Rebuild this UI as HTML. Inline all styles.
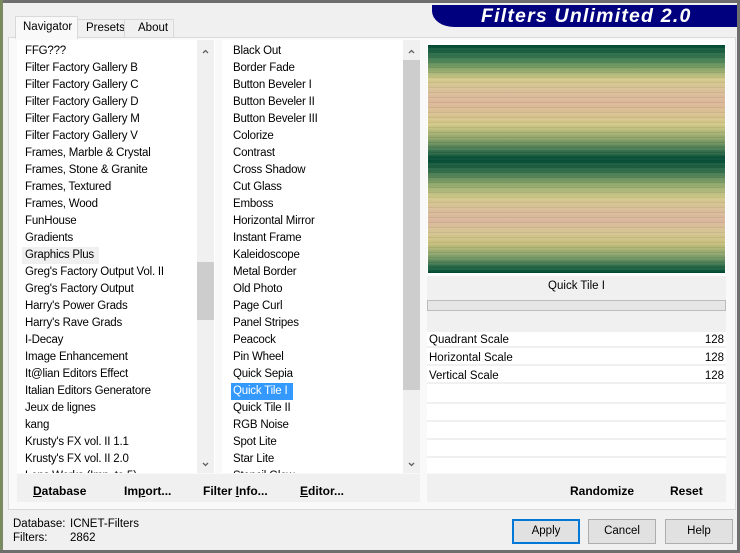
<!DOCTYPE html>
<html><head><style>
*{margin:0;padding:0;box-sizing:border-box}
body{width:740px;height:553px;overflow:hidden;background:#f0f0f0;font-family:"Liberation Sans",sans-serif;font-size:11.5px;color:#000;position:relative}
.a{position:absolute}
.list div{height:17px;line-height:17px;padding-left:8px;white-space:nowrap;letter-spacing:-0.2px}
.sb{background:#f0f0f0;width:17px}
.arr{width:17px;height:10px}
.btn{position:absolute;border:1px solid #adadad;background:#e1e1e1;text-align:center;line-height:22px;height:25px;width:68px}
.bb{font-weight:bold;font-size:12px}
.row{position:absolute;left:427px;width:299px;height:16px;background:#fff;border-bottom:2px solid #f0f0f0;line-height:16px}
</style></head><body>
<div class="a" style="left:0;top:0;width:740px;height:3px;background:#6e6e6e"></div>
<div class="a" style="left:0;top:0;width:3px;height:553px;background:#7a8a60"></div>
<div class="a" style="left:0;top:550px;width:740px;height:3px;background:#6e6e6e"></div>
<div class="a" style="left:737px;top:0;width:3px;height:553px;background:#6e6e6e"></div>
<!-- banner -->
<div class="a" style="left:432px;top:5px;width:305px;height:22px;background:#00007f;border-bottom-left-radius:22px 16px;color:#fff;font-weight:bold;font-style:italic;font-size:19.5px;line-height:23px;padding-left:49px;letter-spacing:1.2px">Filters Unlimited 2.0</div>
<!-- panel -->
<div class="a" style="left:8px;top:37px;width:728px;height:473px;background:#f9f9f9;border:1px solid #d9d9d9"></div>
<!-- tabs -->
<div class="a" style="left:77px;top:19px;width:97px;height:19px;border:1px solid #d9d9d9;background:#f0f0f0"></div>
<div class="a" style="left:86px;top:22px">Presets</div>
<div class="a" style="left:124px;top:19px;width:1px;height:18px;background:#d9d9d9"></div>
<div class="a" style="left:138px;top:22px">About</div>
<div class="a" style="left:15px;top:16px;width:63px;height:23px;border:1px solid #d9d9d9;border-bottom:none;background:#f9f9f9;padding:4px 0 0 7px">Navigator</div>
<!-- left list -->
<div class="a" style="left:17px;top:40px;width:198px;height:433px;background:#fff;overflow:hidden">
<div class="list" style="padding-top:3px">
<div>FFG???</div><div>Filter Factory Gallery B</div><div>Filter Factory Gallery C</div><div>Filter Factory Gallery D</div><div>Filter Factory Gallery M</div><div>Filter Factory Gallery V</div><div>Frames, Marble &amp; Crystal</div><div>Frames, Stone &amp; Granite</div><div>Frames, Textured</div><div>Frames, Wood</div><div>FunHouse</div><div>Gradients</div><div><span style="background:#f0f0f0;margin-left:-3px;padding:0 5px 0 3px;display:inline-block;height:17px">Graphics Plus</span></div><div>Greg's Factory Output Vol. II</div><div>Greg's Factory Output</div><div>Harry's Power Grads</div><div>Harry's Rave Grads</div><div>I-Decay</div><div>Image Enhancement</div><div>It@lian Editors Effect</div><div>Italian Editors Generatore</div><div>Jeux de lignes</div><div>kang</div><div>Krusty's FX vol. II 1.1</div><div>Krusty's FX vol. II 2.0</div><div>Lens Works (Imp. to 5)</div>
</div></div>
<div class="a sb" style="left:197px;top:40px;height:433px"></div>
<div class="a" style="left:197px;top:262px;width:17px;height:58px;background:#cdcdcd"></div>
<svg class="a arr" style="left:197px;top:47px" viewBox="0 0 17 10"><path d="M6 6 L8.5 3.5 L11 6" fill="none" stroke="#606060" stroke-width="1.3"/></svg>
<svg class="a arr" style="left:197px;top:459px" viewBox="0 0 17 10"><path d="M6 4 L8.5 6.5 L11 4" fill="none" stroke="#606060" stroke-width="1.3"/></svg>
<!-- middle list -->
<div class="a" style="left:222px;top:40px;width:198px;height:433px;background:#fff;overflow:hidden">
<div class="list" style="padding-top:3px;padding-left:3px">
<div>Black Out</div><div>Border Fade</div><div>Button Beveler I</div><div>Button Beveler II</div><div>Button Beveler III</div><div>Colorize</div><div>Contrast</div><div>Cross Shadow</div><div>Cut Glass</div><div>Emboss</div><div>Horizontal Mirror</div><div>Instant Frame</div><div>Kaleidoscope</div><div>Metal Border</div><div>Old Photo</div><div>Page Curl</div><div>Panel Stripes</div><div>Peacock</div><div>Pin Wheel</div><div>Quick Sepia</div><div><span style="background:#3399ff;color:#fff;margin-left:-2px;padding:0 6px 0 2px;display:inline-block;height:17px">Quick Tile I</span></div><div>Quick Tile II</div><div>RGB Noise</div><div>Spot Lite</div><div>Star Lite</div><div>Stencil Glow</div>
</div></div>
<div class="a sb" style="left:403px;top:40px;height:433px"></div>
<div class="a" style="left:403px;top:60px;width:17px;height:330px;background:#cdcdcd"></div>
<svg class="a arr" style="left:403px;top:47px" viewBox="0 0 17 10"><path d="M6 6 L8.5 3.5 L11 6" fill="none" stroke="#606060" stroke-width="1.3"/></svg>
<svg class="a arr" style="left:403px;top:459px" viewBox="0 0 17 10"><path d="M6 4 L8.5 6.5 L11 4" fill="none" stroke="#606060" stroke-width="1.3"/></svg>
<!-- button bars -->
<div class="a" style="left:17px;top:474px;width:403px;height:28px;background:#f0f0f0"></div>
<div class="a bb" style="left:33px;top:484px"><u>D</u>atabase</div>
<div class="a bb" style="left:124px;top:484px">Im<u>p</u>ort...</div>
<div class="a bb" style="left:203px;top:484px">Filter <u>I</u>nfo...</div>
<div class="a bb" style="left:300px;top:484px"><u>E</u>ditor...</div>
<div class="a" style="left:427px;top:474px;width:299px;height:28px;background:#f0f0f0"></div>
<div class="a bb" style="left:570px;top:484px">Randomize</div>
<div class="a bb" style="left:670px;top:484px">Reset</div>
<!-- right -->
<div class="a" style="left:427px;top:40px;width:299px;height:433px;background:#fff"></div>
<div class="a" style="left:428px;top:45px;width:297px;height:228px;background:linear-gradient(#004a32 0%,#3d7a52 6%,#8ea86a 11%,#d3c98a 15%,#d9bf98 20%,#dcb79a 25%,#d8c090 30%,#d2c886 35%,#8ea468 41%,#3f7650 46%,#004a32 50%,#2c6a48 55%,#8ca66a 61%,#d1c888 67%,#d8be98 72%,#dbb69c 77%,#d6c492 82%,#c8c07c 87%,#7c9c66 93%,#2a6a48 97%,#004a32 100%)"></div>
<div class="a" style="left:428px;top:45px;width:297px;height:228px;background:repeating-linear-gradient(rgba(0,0,0,0) 0 2px,rgba(0,0,0,.06) 2px 3px,rgba(255,255,255,.05) 3px 5px)"></div>
<div class="a" style="left:427px;top:276px;width:299px;height:21px;background:#f0f0f0;text-align:center;line-height:21px">Quick Tile I</div>
<div class="a" style="left:427px;top:297px;width:299px;height:4px;background:#f0f0f0"></div>
<div class="a" style="left:427px;top:300px;width:299px;height:11px;background:#e6e6e6;border:1px solid #bcbcbc"></div>
<div class="a" style="left:427px;top:311px;width:299px;height:21px;background:#f0f0f0"></div>
<div class="row" style="top:332px"><span style="padding-left:2px">Quadrant Scale</span><span style="float:right;padding-right:2px">128</span></div>
<div class="row" style="top:350px"><span style="padding-left:2px">Horizontal Scale</span><span style="float:right;padding-right:2px">128</span></div>
<div class="row" style="top:368px"><span style="padding-left:2px">Vertical Scale</span><span style="float:right;padding-right:2px">128</span></div>
<div class="a" style="left:427px;top:402px;width:299px;height:2px;background:#f0f0f0"></div>
<div class="a" style="left:427px;top:420px;width:299px;height:2px;background:#f0f0f0"></div>
<div class="a" style="left:427px;top:438px;width:299px;height:2px;background:#f0f0f0"></div>
<div class="a" style="left:427px;top:456px;width:299px;height:2px;background:#f0f0f0"></div>
<!-- status -->
<div class="a" style="left:13px;top:518px">Database:</div>
<div class="a" style="left:70px;top:518px">ICNET-Filters</div>
<div class="a" style="left:13px;top:532px">Filters:</div>
<div class="a" style="left:70px;top:532px">2862</div>
<div class="btn" style="left:512px;top:519px;border:2px solid #0078d7;line-height:21px">Apply</div>
<div class="btn" style="left:588px;top:519px">Cancel</div>
<div class="btn" style="left:665px;top:519px">Help</div>
</body></html>
